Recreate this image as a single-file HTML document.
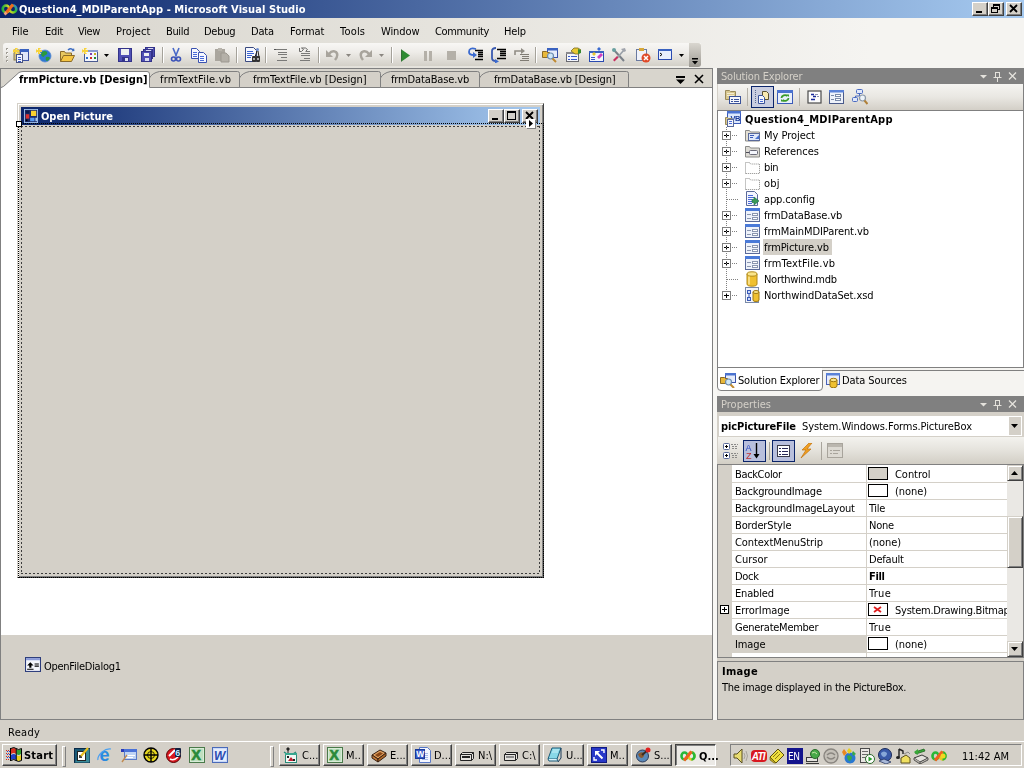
<!DOCTYPE html>
<html>
<head>
<meta charset="utf-8">
<title>Question4_MDIParentApp - Microsoft Visual Studio</title>
<style>
html,body{margin:0;padding:0;}
body{width:1024px;height:768px;overflow:hidden;background:#d4d0c8;position:relative;
 font-family:"DejaVu Sans Condensed","Liberation Sans",sans-serif;font-size:11px;color:#000;line-height:13px;}
.abs,.t{position:absolute;}
.t{white-space:nowrap;letter-spacing:-0.25px;will-change:transform;}
.b{font-weight:bold;letter-spacing:0;}
/* title bar */
#title{left:0;top:0;width:1024px;height:18px;background:linear-gradient(to right,#0a246a,#a6caf0);}
.wbtn{position:absolute;top:2px;width:16px;height:14px;background:#d4d0c8;box-sizing:border-box;
 border:1px solid;border-color:#fff #404040 #404040 #fff;box-shadow:inset -1px -1px 0 #808080;}
/* menu */
#menu{left:0;top:18px;width:1024px;height:25px;background:linear-gradient(to right,#d8d5cd 0%,#e6e4de 45%,#f5f4f1 85%);}
#tbarbg{left:0;top:43px;width:1024px;height:25px;background:linear-gradient(to right,#d8d5cd 0%,#e6e4de 45%,#f5f4f1 85%);}
#tbar{left:3px;top:43px;width:698px;height:23px;border-radius:3px 0 3px 3px;background:linear-gradient(to bottom,#f8f7f5 0%,#eeece8 40%,#d3d0c8 100%);}
#tgrip{left:689px;top:43px;width:12px;height:24px;border-radius:0 3px 3px 0;background:linear-gradient(to bottom,#d9d6cf 0%,#9d9a93 100%);}
.sep{position:absolute;top:47px;width:1px;height:16px;background:#a5a29a;box-shadow:1px 0 0 #fff;}
.ico{position:absolute;width:16px;height:16px;top:47px;}

/* document well */
#well{left:0;top:68px;width:713px;height:652px;background:#fff;box-sizing:border-box;border:1px solid #808080;border-bottom-color:#808080;}
#tabrow{left:1px;top:69px;width:711px;height:18px;background:#d8d5cd;border-bottom:1px solid #808080;}
.tab{position:absolute;top:71px;height:16px;}
#ctray{left:1px;top:635px;width:711px;height:84px;background:#d4d0c8;}
/* form */
#form{left:17px;top:103px;width:527px;height:475px;box-sizing:border-box;background:#d4d0c8;
 border:1px solid;border-color:#d4d0c8 #404040 #404040 #d4d0c8;box-shadow:inset 1px 1px 0 #fff,inset -1px -1px 0 #808080;}
#ftitle{left:21px;top:107px;width:519px;height:18px;background:linear-gradient(to right,#0a246a,#a6caf0);}
.fbtn{position:absolute;top:109px;width:16px;height:14px;background:#d4d0c8;box-sizing:border-box;
 border:1px solid;border-color:#fff #404040 #404040 #fff;box-shadow:inset -1px -1px 0 #808080;}
#pic{left:21px;top:126px;width:519px;height:448px;background:repeating-linear-gradient(to right,#3c3c3c 0 2px,transparent 2px 4px) left top/100% 1px no-repeat,repeating-linear-gradient(to right,#3c3c3c 0 2px,transparent 2px 4px) left bottom/100% 1px no-repeat,repeating-linear-gradient(to bottom,#3c3c3c 0 2px,transparent 2px 4px) left top/1px 100% no-repeat,repeating-linear-gradient(to bottom,#3c3c3c 0 2px,transparent 2px 4px) right top/1px 100% no-repeat;}
#sel{left:18px;top:123px;width:526px;height:455px;box-sizing:border-box;border:1px dotted #000;}

/* right panels */
.hdr{position:absolute;left:717px;width:307px;height:16px;background:#808080;}
.hdr .t{color:#d4d0c8;left:4px;top:2px;}
#setb{left:718px;top:84px;width:306px;height:26px;background:linear-gradient(to bottom,#f5f4f1 0%,#e9e7e2 50%,#d3cfc7 100%);}
#setree{left:717px;top:110px;width:307px;height:258px;box-sizing:border-box;background:#fff;border:1px solid #808080;}
#tstrip{left:717px;top:368px;width:307px;height:28px;background:#f5f4f1;}
#pcombo{left:718px;top:415px;width:305px;height:22px;box-sizing:border-box;background:#fff;border:1px solid #d4d0c8;}
#ptb{left:718px;top:437px;width:306px;height:27px;background:linear-gradient(to bottom,#f3f2ee 0%,#e6e4de 45%,#d2cec5 100%);}
#pgrid{left:717px;top:464px;width:307px;height:194px;box-sizing:border-box;background:#fff;border:1px solid #808080;}
.prow{position:absolute;left:732px;width:275px;height:1px;background:#d4d0c8;}
#pdesc{left:717px;top:661px;width:307px;height:59px;box-sizing:border-box;background:#d4d0c8;border:1px solid #808080;}
.sw{position:absolute;left:868px;width:20px;height:13px;box-sizing:border-box;border:1px solid #000;background:#fff;}
.pm{position:absolute;width:9px;height:9px;box-sizing:border-box;border:1px solid #808080;background:#fff;}
.pm:before{content:"";position:absolute;left:1px;top:3px;width:5px;height:1px;background:#000;}
.pm:after{content:"";position:absolute;left:3px;top:1px;width:1px;height:5px;background:#000;}

/* status + taskbar */
#taskbar{left:0;top:741px;width:1024px;height:27px;background:#d4d0c8;border-top:1px solid #fff;box-sizing:border-box;}
.tbtn{position:absolute;top:744px;width:41px;height:22px;box-sizing:border-box;background:#d4d0c8;
 border:1px solid;border-color:#fff #404040 #404040 #fff;box-shadow:inset -1px -1px 0 #808080;}
.tbtn .t{left:22px;top:4px;letter-spacing:0;}
.grip{position:absolute;top:746px;width:2px;height:19px;border:1px solid;border-color:#fff #808080 #808080 #fff;box-sizing:content-box;}
#tray{left:730px;top:744px;width:292px;height:22px;box-sizing:border-box;border:1px solid;border-color:#808080 #fff #fff #808080;}
.sb{position:absolute;left:1007px;width:16px;height:16px;box-sizing:border-box;background:#d4d0c8;border:1px solid;border-color:#d4d0c8 #404040 #404040 #d4d0c8;box-shadow:inset 1px 1px 0 #fff,inset -1px -1px 0 #808080;}
</style>
</head>
<body>
<!-- TITLE BAR -->
<div id="title" class="abs"></div>
<div class="t b" style="left:19px;top:3px;color:#fff;letter-spacing:0.077px;">Question4_MDIParentApp - Microsoft Visual Studio</div>
<div class="wbtn" style="left:972px"></div>
<div class="wbtn" style="left:988px"></div>
<div class="wbtn" style="left:1006px"></div>
<!-- MENU -->
<div id="menu" class="abs"></div>
<div class="t" style="left:12px;top:25px;letter-spacing:0.039px;">File</div>
<div class="t" style="left:45px;top:25px;letter-spacing:-0.224px;">Edit</div>
<div class="t" style="left:78px;top:25px;letter-spacing:-0.35px;">View</div>
<div class="t" style="left:116px;top:25px;letter-spacing:0.115px;">Project</div>
<div class="t" style="left:166px;top:25px;letter-spacing:-0.35px;">Build</div>
<div class="t" style="left:204px;top:25px;letter-spacing:-0.266px;">Debug</div>
<div class="t" style="left:251px;top:25px;letter-spacing:-0.214px;">Data</div>
<div class="t" style="left:290px;top:25px;letter-spacing:-0.062px;">Format</div>
<div class="t" style="left:340px;top:25px;letter-spacing:0.203px;">Tools</div>
<div class="t" style="left:381px;top:25px;letter-spacing:-0.1px;">Window</div>
<div class="t" style="left:435px;top:25px;letter-spacing:-0.35px;">Community</div>
<div class="t" style="left:504px;top:25px;letter-spacing:-0.193px;">Help</div>
<div id="tbarbg" class="abs"></div>
<div id="tbar" class="abs"></div>
<div id="tgrip" class="abs"></div>
<!--TB-ICONS-START-->
<svg class="abs" style="left:5px;top:47px" width="4" height="17" viewBox="0 0 4 17"><rect x="1" y="1" width="2" height="2" fill="#a09c94"/><rect x="2" y="2" width="1" height="1" fill="#fff"/><rect x="1" y="5" width="2" height="2" fill="#a09c94"/><rect x="2" y="6" width="1" height="1" fill="#fff"/><rect x="1" y="9" width="2" height="2" fill="#a09c94"/><rect x="2" y="10" width="1" height="1" fill="#fff"/><rect x="1" y="13" width="2" height="2" fill="#a09c94"/><rect x="2" y="14" width="1" height="1" fill="#fff"/></svg>
<svg class="abs" style="left:13px;top:47px" width="16" height="16" viewBox="0 0 16 16"><rect x="1" y="3" width="6" height="10" fill="#d0c08a" stroke="#8a7a4a" stroke-width="1"/><rect x="7.5" y="2.5" width="8" height="11" fill="#dfe6f8" stroke="#3c50a0"/><rect x="7" y="2" width="9" height="3" fill="#3a62c0"/><rect x="3.5" y="7.5" width="6" height="8" fill="#f4f6ff" stroke="#4a5580"/><path d="M5 10.500h3M5 12.500h3M5 14.500h3" stroke="#3a5ac8"/><path d="M0 3h2v-2h2v2h2v2h-2v2h-2v-2h-2z" fill="#f7d23c"/><path d="M0 3m-1 -2l2 2m4 -2l-2 2m-4 4l2 -2m4 2l-2 -2" stroke="#f9e27a" stroke-width="1" fill="none"/></svg>
<svg class="abs" style="left:36px;top:47px" width="16" height="16" viewBox="0 0 16 16"><circle cx="9" cy="9" r="6" fill="#2f79cf"/><path d="M6 5q3-2 5 0q1 2-1 3q-2 0-2 2q-2 0-3-2z M10 10q3-1 4 1q-1 3-3 3q-2-1-1-4z" fill="#2a9a3c"/><circle cx="9" cy="9" r="6" fill="none" stroke="#5a8ad0" stroke-width="0.8"/><path d="M0 3h2v-2h2v2h2v2h-2v2h-2v-2h-2z" fill="#f7d23c"/><path d="M0 3m-1 -2l2 2m4 -2l-2 2m-4 4l2 -2m4 2l-2 -2" stroke="#f9e27a" stroke-width="1" fill="none"/></svg>
<svg class="abs" style="left:59px;top:47px" width="16" height="16" viewBox="0 0 16 16"><path d="M1.500 14.500V4.500h4l1 1.500h6v3" fill="#e8c860" stroke="#8a6a28"/><path d="M1.500 14.500l3-6h11l-3 6z" fill="#f5c542" stroke="#8a6a28"/><path d="M9 3q3-2.500 5 0" stroke="#3a6ac0" fill="none" stroke-width="1.600"/><path d="M12.500 4.500l3-.5-.5-3z" fill="#3a6ac0"/></svg>
<svg class="abs" style="left:82px;top:47px" width="16" height="16" viewBox="0 0 16 16"><rect x="2.500" y="3.500" width="13" height="11" fill="#f4f6fc" stroke="#4a5a90"/><rect x="2" y="3" width="14" height="2" fill="#8a9ad0"/><rect x="8" y="6" width="2" height="2" fill="#8040b0"/><rect x="12" y="6" width="2" height="2" fill="#c8b020"/><rect x="4" y="10" width="2" height="2" fill="#2a70d0"/><rect x="8" y="10" width="2" height="2" fill="#d03020"/><rect x="12" y="10" width="2" height="2" fill="#208a30"/><path d="M0 3h2v-2h2v2h2v2h-2v2h-2v-2h-2z" fill="#f7d23c"/><path d="M0 3m-1 -2l2 2m4 -2l-2 2m-4 4l2 -2m4 2l-2 -2" stroke="#f9e27a" stroke-width="1" fill="none"/></svg>
<svg class="abs" style="left:104px;top:54px" width="5" height="3" viewBox="0 0 5 3"><path d="M0 0h5l-2.500 3z" fill="#000"/></svg>
<svg class="abs" style="left:117px;top:47px" width="16" height="16" viewBox="0 0 16 16"><rect x="1.500" y="1.500" width="13" height="13" fill="#5050b4" stroke="#33338a"/><rect x="4" y="2" width="8" height="6" fill="#eef1f0"/><rect x="5" y="10" width="7" height="4" fill="#33338a"/><rect x="8" y="11" width="3" height="3" fill="#e0e2f0"/></svg>
<svg class="abs" style="left:140px;top:47px" width="16" height="16" viewBox="0 0 16 16"><rect x="5.500" y="0.500" width="9" height="9" fill="#5050b4" stroke="#33338a"/><rect x="3.500" y="2.500" width="9" height="9" fill="#5050b4" stroke="#33338a"/><rect x="1.500" y="4.500" width="10" height="10" fill="#5050b4" stroke="#33338a"/><rect x="4" y="6" width="5" height="3" fill="#eef1f0"/><rect x="5" y="11" width="4" height="3" fill="#d8daf0"/><rect x="8" y="1" width="5" height="1" fill="#d8daf0"/><rect x="6" y="3" width="5" height="1" fill="#d8daf0"/></svg>
<div class="sep" style="left:162px"></div>
<svg class="abs" style="left:168px;top:47px" width="16" height="16" viewBox="0 0 16 16"><path d="M5 1l3.500 8.500M11 1l-3.500 8.500" stroke="#4a6ac8" stroke-width="1.600" fill="none"/><circle cx="5.500" cy="12" r="2" fill="none" stroke="#3a52b8" stroke-width="1.600"/><circle cx="10.500" cy="12" r="2" fill="none" stroke="#3a52b8" stroke-width="1.600"/></svg>
<svg class="abs" style="left:191px;top:47px" width="16" height="16" viewBox="0 0 16 16"><path d="M0.500 1.500h5l3 3v7h-8z" fill="#f6f8ff" stroke="#3a52b0"/><path d="M2 5.500h4M2 7.500h4M2 9.500h4" stroke="#4a6ad8"/><path d="M7.500 5.500h5l3 3v7h-8z" fill="#f6f8ff" stroke="#3a52b0"/><path d="M9 9.500h4M9 11.500h4M9 13.500h4" stroke="#4a6ad8"/></svg>
<svg class="abs" style="left:214px;top:47px" width="16" height="16" viewBox="0 0 16 16"><rect x="1" y="2" width="10" height="12" fill="#aaa69e"/><rect x="4" y="1" width="4" height="3" fill="#b8b4ac"/><path d="M7 6h5l3 3v6h-8z" fill="#b4b0a8" stroke="#9c9890" stroke-width="1"/></svg>
<div class="sep" style="left:236px"></div>
<svg class="abs" style="left:244px;top:47px" width="16" height="16" viewBox="0 0 16 16"><path d="M1.500 0.500h8l3 3v11h-11z" fill="#f6f8ff" stroke="#3a4a80"/><path d="M3 4.500h6M3 6.500h7M3 8.500h5M3 10.500h4" stroke="#3a62d0"/><circle cx="13.500" cy="2.500" r="1.500" fill="#6a8ad0"/><path d="M13 4l-2 6M14 4l1 6" stroke="#222" /><rect x="8" y="9" width="4" height="6" rx="1" fill="#333"/><rect x="12" y="9" width="4" height="6" rx="1" fill="#333"/><rect x="9" y="11" width="2" height="2" fill="#aaa"/><rect x="13" y="11" width="2" height="2" fill="#aaa"/></svg>
<div class="sep" style="left:265px"></div>
<svg class="abs" style="left:272px;top:47px" width="16" height="16" viewBox="0 0 16 16"><path d="M3 2.500h12M6 5.500h9M6 7.500h9M9 10.500h6M5 13.500h10" stroke="#7a7a78"/><rect x="2" y="2" width="2" height="1" fill="#555"/></svg>
<svg class="abs" style="left:295px;top:47px" width="16" height="16" viewBox="0 0 16 16"><path d="M6 8.500h9M6 6.500h9M9 11.500h6M5 13.500h10M11 4.500h4" stroke="#7a7a78"/><path d="M4.500 1v3.500h2l2-2 -2-1.500h4l2 1.500-2 2" fill="none" stroke="#6a6a68"/></svg>
<div class="sep" style="left:318px"></div>
<svg class="abs" style="left:325px;top:47px" width="16" height="16" viewBox="0 0 16 16"><path d="M4 7q3-4 7-2q3 3-1 8" fill="none" stroke="#a8a49c" stroke-width="2.500"/><path d="M1 3v7h7z" fill="#a8a49c"/></svg>
<svg class="abs" style="left:346px;top:54px" width="5" height="3" viewBox="0 0 5 3"><path d="M0 0h5l-2.500 3z" fill="#8a8680"/></svg>
<svg class="abs" style="left:357px;top:47px" width="16" height="16" viewBox="0 0 16 16"><path d="M12 7q-3-4-7-2q-3 3 1 8" fill="none" stroke="#a8a49c" stroke-width="2.500"/><path d="M15 3v7h-7z" fill="#a8a49c"/></svg>
<svg class="abs" style="left:379px;top:54px" width="5" height="3" viewBox="0 0 5 3"><path d="M0 0h5l-2.500 3z" fill="#8a8680"/></svg>
<div class="sep" style="left:391px"></div>
<svg class="abs" style="left:400px;top:47px" width="16" height="16" viewBox="0 0 16 16"><path d="M1.500 2.500l8.500 6-8.500 6z" fill="#2e8a32"/><path d="M1.500 2.500v12" stroke="#1e5a22" fill="none" stroke-width="0.800"/></svg>
<svg class="abs" style="left:423px;top:47px" width="16" height="16" viewBox="0 0 16 16"><rect x="1" y="4" width="3" height="10" fill="#b4b0a8"/><rect x="6" y="4" width="3" height="10" fill="#b4b0a8"/></svg>
<svg class="abs" style="left:445px;top:47px" width="16" height="16" viewBox="0 0 16 16"><rect x="2" y="4" width="9" height="9" fill="#b4b0a8"/></svg>
<svg class="abs" style="left:467px;top:47px" width="16" height="16" viewBox="0 0 16 16"><path d="M9 2q-7-2-7 3q0 3 5 3" fill="none" stroke="#3a6ad0" stroke-width="1.800"/><path d="M6 5l4 3-4 3z" fill="#3a6ad0"/><path d="M8 3.500h8M11 5.500h5M11 7.500h5M11 9.500h5M8 12.500h8" stroke="#000" stroke-width="1.400"/></svg>
<svg class="abs" style="left:490px;top:47px" width="16" height="16" viewBox="0 0 16 16"><path d="M6 1q-4 0-4 3v7q0 3 4 3" fill="none" stroke="#3a5ab0" stroke-width="1.800"/><path d="M5 12l4 2.500-4 2z" fill="#3a6ad0"/><path d="M7 2.500h9M10 4.500h6M10 6.500h6M10 8.500h6M7 11.500h9" stroke="#000" stroke-width="1.400"/></svg>
<svg class="abs" style="left:513px;top:47px" width="16" height="16" viewBox="0 0 16 16"><path d="M2 8v-4h7" fill="none" stroke="#908c84" stroke-width="1.600"/><path d="M8 1l4 3-4 3z" fill="#908c84"/><path d="M7 7.500h9M9 9.500h7M9 11.500h7M7 13.500h9" stroke="#807c74"/></svg>
<div class="sep" style="left:535px"></div>
<svg class="abs" style="left:542px;top:47px" width="16" height="16" viewBox="0 0 16 16"><rect x="5.500" y="1.500" width="10" height="9" fill="#e6ecfa" stroke="#3a52a8"/><rect x="5" y="1" width="11" height="2.500" fill="#3a62c0"/><path d="M0.500 4.500h4l1 1h2v5h-7z" fill="#e8b83a" stroke="#8a6a28"/><circle cx="8.500" cy="9" r="3" fill="#d0e8f8" stroke="#6a8ab0" stroke-width="1.200"/><path d="M10.500 11.500l3.500 3.500" stroke="#c08a30" stroke-width="2"/></svg>
<svg class="abs" style="left:565px;top:47px" width="16" height="16" viewBox="0 0 16 16"><rect x="1.500" y="5.500" width="12" height="9" fill="#f4f6fc" stroke="#6a6a70"/><rect x="1" y="5" width="13" height="2" fill="#8a8a90"/><path d="M3 9.500h2M6 9.500h6M3 12.500h2M6 12.500h6" stroke="#3a5ac8"/><path d="M6 4l3-3h4l3 2v2l-3 2h-3z" fill="#e8c832" stroke="#7a6a20" stroke-width="0.800"/><path d="M13 2l3 1v3l-3 1z" fill="#3a8a30"/></svg>
<svg class="abs" style="left:588px;top:47px" width="16" height="16" viewBox="0 0 16 16"><rect x="1.500" y="4.500" width="14" height="10" fill="#f4f6fc" stroke="#2a4ab0"/><rect x="1" y="4" width="15" height="2" fill="#3a62c0"/><path d="M9 2l2-2 2 2-2 2z" fill="#3a6ad0"/><path d="M4 7l2-2 2 2-2 2z" fill="#e8c832"/><path d="M9 10l4-4 2 2-4 4z" fill="#d040c0"/><path d="M3 10.500h4M3 12.500h4" stroke="#3a5ac8"/></svg>
<svg class="abs" style="left:611px;top:47px" width="16" height="16" viewBox="0 0 16 16"><path d="M3 3l10 11" stroke="#7a8088" stroke-width="2"/><circle cx="3" cy="3" r="2" fill="#6aa0a0"/><path d="M13 3l-7 8" stroke="#9aa0a8" stroke-width="1.600"/><path d="M10 2l4 -1 1 3-2 1z" fill="#a0a4ac"/><path d="M6 9l-4 4 1.500 1.500 4-4z" fill="#c83060"/></svg>
<svg class="abs" style="left:635px;top:47px" width="16" height="16" viewBox="0 0 16 16"><rect x="1.500" y="2.500" width="10" height="11" fill="#f0f2fa" stroke="#6a7aa0"/><rect x="4" y="1" width="5" height="3" fill="#d8a838"/><circle cx="11" cy="11" r="4.500" fill="#e04a28"/><path d="M9 9l4 4M13 9l-4 4" stroke="#fff" stroke-width="1.500"/></svg>
<svg class="abs" style="left:657px;top:47px" width="16" height="16" viewBox="0 0 16 16"><rect x="1.500" y="2.500" width="13" height="10" fill="#e8effc" stroke="#2a4ab0"/><rect x="1" y="2" width="14" height="2" fill="#3a62c0"/><path d="M3 6l2 1.500-2 1.500" stroke="#000" fill="none"/></svg>
<svg class="abs" style="left:679px;top:54px" width="5" height="3" viewBox="0 0 5 3"><path d="M0 0h5l-2.500 3z" fill="#000"/></svg>
<svg class="abs" style="left:692px;top:58px" width="7" height="8" viewBox="0 0 7 8"><rect x="0" y="0" width="6" height="1.500" fill="#000"/><path d="M0 3h6l-3 3.500z" fill="#000"/><path d="M1 4.500h6l-3 3.500z" fill="#fff" opacity="0.0"/></svg>
<svg class="abs" style="left:1px;top:2px" width="18" height="14" viewBox="0 0 18 14"><defs><linearGradient id="vg1" x1="0" y1="0" x2="1" y2="0"><stop offset="0" stop-color="#20b040"/><stop offset="1" stop-color="#f0e020"/></linearGradient><linearGradient id="vg2" x1="0" y1="1" x2="1" y2="0"><stop offset="0" stop-color="#f0e020"/><stop offset="0.550" stop-color="#30c030"/><stop offset="1" stop-color="#3080e0"/></linearGradient></defs><ellipse cx="5" cy="7" rx="3.300" ry="3.500" fill="none" stroke="url(#vg1)" stroke-width="2.600"/><ellipse cx="12" cy="7" rx="3.300" ry="3.500" fill="none" stroke="url(#vg2)" stroke-width="2.600"/><path d="M4.500 11.500L12 2.500" stroke="#f06a20" stroke-width="3"/><path d="M3.500 12.500l2-2" stroke="#f0a080" stroke-width="2.500"/></svg>
<svg class="abs" style="left:972px;top:2px" width="16" height="14" viewBox="0 0 16 14"><rect x="4" y="9" width="6" height="2" fill="#000"/></svg>
<svg class="abs" style="left:988px;top:2px" width="16" height="14" viewBox="0 0 16 14"><rect x="5.500" y="2.500" width="6" height="5" fill="none" stroke="#000"/><rect x="5" y="2" width="7" height="2" fill="#000"/><rect x="3.500" y="5.500" width="6" height="5" fill="#d4d0c8" stroke="#000"/><rect x="3" y="5" width="7" height="2" fill="#000"/></svg>
<svg class="abs" style="left:1006px;top:2px" width="16" height="14" viewBox="0 0 16 14"><path d="M4 3l7 7M11 3l-7 7" stroke="#000" stroke-width="1.800"/></svg>
<!--TB-ICONS-END-->

<!-- DOCUMENT WELL -->
<div id="well" class="abs"></div>
<div id="tabrow" class="abs"></div>
<svg class="abs" style="left:0;top:68px" width="713" height="21" viewBox="0 0 713 21">
 <!-- inactive tabs -->
 <g fill="#d4d0c8" stroke="#808080" stroke-width="1">
  <path d="M149.5 19.500 L149.5 10 Q152.0 5 159.5 3.500 L237.5 3.500 Q239.5 3.500 239.5 5.500 L239.5 19.500 Z"/>
  <path d="M239.5 19.500 L239.5 10 Q242.0 5 249.5 3.500 L378.5 3.500 Q380.5 3.500 380.5 5.500 L380.5 19.500 Z"/>
  <path d="M380.5 19.500 L380.5 10 Q383.0 5 390.5 3.500 L477.5 3.500 Q479.5 3.500 479.5 5.500 L479.5 19.500 Z"/>
  <path d="M479.5 19.500 L479.5 10 Q482.0 5 489.5 3.500 L626.5 3.500 Q628.5 3.500 628.5 5.500 L628.5 19.500 Z"/>
 </g>
 <!-- active tab -->
 <path d="M1 20 L1 19.5 L3.5 18.5 L19 4.5 Q21 3.5 23 3.5 L147 3.5 Q149.5 3.5 149.5 6 L149.5 20 Z" fill="#fff" stroke="none"/>
 <path d="M1 19.5 L3.5 18.5 L19 4.5 Q21 3.5 23 3.5 L147 3.5 Q149.5 3.5 149.5 6 L149.5 19.5" fill="none" stroke="#808080"/>
 <!-- dropdown & close -->
 <path d="M676 8 h9 v2 h-9z M676 11.5 h9 l-4.5 4.5z" fill="#000"/>
 <path d="M695 7 l8 8 M703 7 l-8 8" stroke="#000" stroke-width="1.6" fill="none"/>
</svg>
<div class="t b" style="left:19px;top:73px;letter-spacing:0.047px;">frmPicture.vb [Design]</div>
<div class="t" style="left:160px;top:73px;letter-spacing:0.188px;">frmTextFile.vb</div>
<div class="t" style="left:253px;top:73px;letter-spacing:0.004px;">frmTextFile.vb [Design]</div>
<div class="t" style="left:391px;top:73px;letter-spacing:-0.132px;">frmDataBase.vb</div>
<div class="t" style="left:494px;top:73px;letter-spacing:-0.152px;">frmDataBase.vb [Design]</div>
<div id="ctray" class="abs"></div>
<!-- FORM -->
<div id="form" class="abs"></div>
<div id="ftitle" class="abs"></div>
<div class="t b" style="left:41px;top:110px;color:#fff;letter-spacing:-0.054px;">Open Picture</div>
<div class="fbtn" style="left:488px"></div>
<div class="fbtn" style="left:504px"></div>
<div class="fbtn" style="left:522px"></div>
<div id="sel" class="abs"></div>
<div id="pic" class="abs"></div>
<div class="t" style="left:44px;top:660px;letter-spacing:-0.268px;">OpenFileDialog1</div>

<div class="abs" style="left:713px;top:68px;width:4px;height:652px;background:#f8f7f4"></div>
<!-- SOLUTION EXPLORER -->
<div class="hdr" style="top:68px"><div class="t" style="letter-spacing:-0.196px;">Solution Explorer</div></div>
<div id="setb" class="abs"></div>
<div id="setree" class="abs"></div>
<div class="abs" style="left:1023px;top:84px;width:1px;height:27px;background:#808080"></div>
<div class="abs" style="left:763px;top:239px;width:69px;height:16px;background:#d4d0c8"></div>
<div class="t b" style="left:745px;top:113px;letter-spacing:0.24px;">Question4_MDIParentApp</div>
<div class="t" style="left:764px;top:129px;letter-spacing:-0.04px;">My Project</div>
<div class="pm" style="left:722px;top:131px"></div>
<div class="t" style="left:764px;top:145px;letter-spacing:0.009px;">References</div>
<div class="pm" style="left:722px;top:147px"></div>
<div class="t" style="left:764px;top:161px;letter-spacing:-0.35px;">bin</div>
<div class="pm" style="left:722px;top:163px"></div>
<div class="t" style="left:764px;top:177px;letter-spacing:0.203px;">obj</div>
<div class="pm" style="left:722px;top:179px"></div>
<div class="t" style="left:764px;top:193px;letter-spacing:-0.118px;">app.config</div>
<div class="t" style="left:764px;top:209px;letter-spacing:-0.132px;">frmDataBase.vb</div>
<div class="pm" style="left:722px;top:211px"></div>
<div class="t" style="left:764px;top:225px;letter-spacing:-0.089px;">frmMainMDIParent.vb</div>
<div class="pm" style="left:722px;top:227px"></div>
<div class="t" style="left:764px;top:241px;letter-spacing:-0.105px;">frmPicture.vb</div>
<div class="pm" style="left:722px;top:243px"></div>
<div class="t" style="left:764px;top:257px;letter-spacing:0.188px;">frmTextFile.vb</div>
<div class="pm" style="left:722px;top:259px"></div>
<div class="t" style="left:764px;top:273px;letter-spacing:-0.286px;">Northwind.mdb</div>
<div class="t" style="left:764px;top:289px;letter-spacing:-0.1px;">NorthwindDataSet.xsd</div>
<div class="pm" style="left:722px;top:291px"></div>

<div id="tstrip" class="abs"></div>
<svg class="abs" style="left:717px;top:367px" width="307" height="26" viewBox="0 0 307 26">
 <path d="M0 3.5 H307" stroke="#808080" fill="none"/>
 <path d="M0.5 1 V20 Q0.5 23.5 4 23.5 H102 Q105.5 23.5 105.5 20 V4" fill="#fff" stroke="#808080"/>
 <path d="M1 1 H105 V4.5 H1z" fill="#fff"/>
 <path d="M0 0.5 H307" stroke="#808080" fill="none"/>
</svg>
<div class="t" style="left:738px;top:374px;letter-spacing:-0.196px;">Solution Explorer</div>
<div class="t" style="left:842px;top:374px;letter-spacing:-0.082px;">Data Sources</div>
<!-- PROPERTIES -->
<div class="hdr" style="top:396px"><div class="t" style="letter-spacing:0.003px;">Properties</div></div>
<div id="pcombo" class="abs"></div>
<div class="t b" style="left:721px;top:420px;letter-spacing:-0.114px;">picPictureFile</div>
<div class="t" style="left:802px;top:420px;letter-spacing:-0.095px;">System.Windows.Forms.PictureBox</div>
<div id="ptb" class="abs"></div>
<div id="pgrid" class="abs"></div>
<div class="abs" style="left:718px;top:465px;width:14px;height:192px;background:#d4d0c8"></div>
<div class="abs" style="left:732px;top:636px;width:134px;height:17px;background:#d4d0c8"></div>
<div class="abs" style="left:866px;top:465px;width:1px;height:192px;background:#d4d0c8"></div>
<div class="t" style="left:735px;top:468px;letter-spacing:-0.35px;">BackColor</div>
<div class="t" style="left:895px;top:468px;width:112px;overflow:hidden;letter-spacing:-0.042px;">Control</div>
<div class="sw" style="top:467px;background:#d4d0c8"></div>
<div class="prow" style="top:482px"></div>
<div class="t" style="left:735px;top:485px;letter-spacing:-0.215px;">BackgroundImage</div>
<div class="t" style="left:895px;top:485px;width:112px;overflow:hidden;letter-spacing:-0.084px;">(none)</div>
<div class="sw" style="top:484px;background:#fff"></div>
<div class="prow" style="top:499px"></div>
<div class="t" style="left:735px;top:502px;letter-spacing:-0.183px;">BackgroundImageLayout</div>
<div class="t" style="left:869px;top:502px;width:138px;overflow:hidden;letter-spacing:-0.35px;">Tile</div>
<div class="prow" style="top:516px"></div>
<div class="t" style="left:735px;top:519px;letter-spacing:-0.152px;">BorderStyle</div>
<div class="t" style="left:869px;top:519px;width:138px;overflow:hidden;letter-spacing:-0.276px;">None</div>
<div class="prow" style="top:533px"></div>
<div class="t" style="left:735px;top:536px;letter-spacing:-0.079px;">ContextMenuStrip</div>
<div class="t" style="left:869px;top:536px;width:138px;overflow:hidden;letter-spacing:-0.084px;">(none)</div>
<div class="prow" style="top:550px"></div>
<div class="t" style="left:735px;top:553px;letter-spacing:-0.006px;">Cursor</div>
<div class="t" style="left:869px;top:553px;width:138px;overflow:hidden;letter-spacing:-0.195px;">Default</div>
<div class="prow" style="top:567px"></div>
<div class="t" style="left:735px;top:570px;letter-spacing:-0.286px;">Dock</div>
<div class="t b" style="left:869px;top:570px;width:138px;overflow:hidden;letter-spacing:-0.35px;">Fill</div>
<div class="prow" style="top:584px"></div>
<div class="t" style="left:735px;top:587px;letter-spacing:-0.167px;">Enabled</div>
<div class="t" style="left:869px;top:587px;width:138px;overflow:hidden;letter-spacing:0.3px;">True</div>
<div class="prow" style="top:601px"></div>
<div class="t" style="left:735px;top:604px;letter-spacing:-0.042px;">ErrorImage</div>
<div class="t" style="left:895px;top:604px;width:112px;overflow:hidden;">System.Drawing.Bitmap</div>
<div class="sw" style="top:603px;background:#fff"></div>
<div class="prow" style="top:618px"></div>
<div class="t" style="left:735px;top:621px;letter-spacing:-0.264px;">GenerateMember</div>
<div class="t" style="left:869px;top:621px;width:138px;overflow:hidden;letter-spacing:0.3px;">True</div>
<div class="prow" style="top:635px"></div>
<div class="t" style="left:735px;top:638px;letter-spacing:-0.125px;">Image</div>
<div class="t" style="left:895px;top:638px;width:112px;overflow:hidden;letter-spacing:-0.084px;">(none)</div>
<div class="sw" style="top:637px;background:#fff"></div>
<div class="prow" style="top:652px"></div>

<div class="pm" style="left:720px;top:605px;border-color:#000"></div>
<div id="pdesc" class="abs"></div>
<div class="t b" style="left:722px;top:665px;letter-spacing:0.3px;">Image</div>
<div class="t" style="left:722px;top:681px;letter-spacing:-0.236px;">The image displayed in the PictureBox.</div>
<!-- STATUS BAR -->
<div class="t" style="left:8px;top:726px;letter-spacing:0.3px;">Ready</div>

<!-- property grid scrollbar -->
<div class="abs" style="left:1007px;top:465px;width:16px;height:192px;background:#eae8e4"></div>
<div class="sb" style="top:465px"></div>
<div class="sb" style="top:516px;height:52px"></div>
<div class="sb" style="top:641px"></div>
<svg class="abs" style="left:1007px;top:465px" width="16" height="191"><path d="M4 10 h7 l-3.5 -4z M4 182 h7 l-3.5 4z" fill="#000"/></svg>
<!-- TASKBAR -->
<div id="taskbar" class="abs"></div>
<div class="tbtn" style="left:2px;width:55px;"><div class="t b" style="left:21px;top:4px;letter-spacing:0.211px;">Start</div></div>
<div class="grip" style="left:62px"></div>
<div class="grip" style="left:270px"></div>
<div class="tbtn" style="left:279px"><div class="t">C...</div></div>
<div class="tbtn" style="left:323px"><div class="t">M..</div></div>
<div class="tbtn" style="left:367px"><div class="t">E...</div></div>
<div class="tbtn" style="left:411px"><div class="t">D...</div></div>
<div class="tbtn" style="left:455px"><div class="t">N:\</div></div>
<div class="tbtn" style="left:499px"><div class="t">C:\</div></div>
<div class="tbtn" style="left:543px"><div class="t">U...</div></div>
<div class="tbtn" style="left:587px"><div class="t">M..</div></div>
<div class="tbtn" style="left:631px"><div class="t">S...</div></div>
<div class="tbtn" style="left:675px;background:#eceae6;border-color:#404040 #fff #fff #404040;box-shadow:inset 1px 1px 0 #808080"><div class="t b" style="left:23px;top:5px">Q...</div></div>
<div id="tray" class="abs"></div>
<div class="t" style="left:962px;top:750px;letter-spacing:0.004px;">11:42 AM</div>
<!--ICONS2-START-->
<svg class="abs" style="left:978px;top:68px" width="46" height="16" viewBox="0 0 46 16"><path d="M2 7h7l-3.500 3.500z" fill="#e4e2dc"/><path d="M17.500 4v5M21.500 4v5M17 4.500h5M15.500 9.500h8M19.500 10v4" stroke="#e4e2dc" fill="none"/><path d="M31 4.500l7 7M38 4.500l-7 7" stroke="#e4e2dc" stroke-width="1.300" fill="none"/></svg>
<svg class="abs" style="left:978px;top:396px" width="46" height="16" viewBox="0 0 46 16"><path d="M2 7h7l-3.500 3.500z" fill="#e4e2dc"/><path d="M17.500 4v5M21.500 4v5M17 4.500h5M15.500 9.500h8M19.500 10v4" stroke="#e4e2dc" fill="none"/><path d="M31 4.500l7 7M38 4.500l-7 7" stroke="#e4e2dc" stroke-width="1.300" fill="none"/></svg>
<div class="abs" style="left:751px;top:86px;width:23px;height:22px;box-sizing:border-box;border:1px solid #0a246a;background:#c9cde0"></div>
<div class="abs" style="left:747px;top:88px;width:1px;height:18px;background:#b5b1a8"></div><div class="abs" style="left:799px;top:88px;width:1px;height:18px;background:#b5b1a8"></div>
<svg class="abs" style="left:725px;top:89px" width="16" height="16" viewBox="0 0 16 16"><path d="M0.500 1.500h4l1 1h5v8h-10z" fill="#d8c890" stroke="#9a8a5a"/><path d="M2 4.500h7M2 6.500h7" stroke="#f4ecd0"/><rect x="4.500" y="7.500" width="11" height="7" fill="#f4f6fc" stroke="#3a529a"/><path d="M6 10.500h2M9 10.500h5M6 12.500h2M9 12.500h5" stroke="#3a529a"/></svg>
<svg class="abs" style="left:754px;top:89px" width="16" height="16" viewBox="0 0 16 16"><path d="M1.500 1v14M1 3.500h2M1 7.500h2M1 11.500h2" stroke="#5a6a90" stroke-dasharray="1 1" fill="none"/><path d="M8.500 2.500h4l2 2v6h-6z" fill="#f8e8b0" stroke="#5a5030"/><path d="M4.500 6.500h4l2 2v6h-6z" fill="#f4f6fc" stroke="#3a529a"/><path d="M6 10.500h3M6 12.500h3" stroke="#4a6ad8"/></svg>
<svg class="abs" style="left:777px;top:89px" width="16" height="16" viewBox="0 0 16 16"><rect x="0.500" y="1.500" width="15" height="13" fill="#e8effc" stroke="#3a5ab8"/><rect x="0" y="1" width="16" height="3" fill="#4a72d0"/><path d="M4.500 9a3.500 3 0 0 1 6-2M11.500 9a3.500 3 0 0 1-6 2" fill="none" stroke="#3a9a28" stroke-width="1.800"/><path d="M9.500 5.500h2.500v2.500zM6.500 12.500h-2.500v-2.500z" fill="#3a9a28"/></svg>
<svg class="abs" style="left:807px;top:89px" width="16" height="16" viewBox="0 0 16 16"><rect x="1" y="2" width="13" height="12" fill="#fdfdfd" stroke="#4a4a4a" stroke-width="1.200"/><path d="M4 5.500h3M6 7.500h3M4 10.500h4" stroke="#1a2a9a" stroke-width="1.300"/><path d="M8 5.500h3M10 7.500h2" stroke="#8a90b0"/></svg>
<svg class="abs" style="left:829px;top:89px" width="16" height="16" viewBox="0 0 16 16"><rect x="0.500" y="1.500" width="14" height="13" fill="#eef2fa" stroke="#4a5a8a"/><rect x="0" y="1" width="15" height="2.500" fill="#5a82d8"/><rect x="6.500" y="5.500" width="5" height="2" fill="#fff" stroke="#7a8aa8"/><rect x="6.500" y="9.500" width="5" height="2" fill="#fff" stroke="#7a8aa8"/><path d="M2 6.500h3M2 10.500h3" stroke="#7a8aa8"/></svg>
<svg class="abs" style="left:852px;top:89px" width="16" height="16" viewBox="0 0 16 16"><rect x="4.500" y="0.500" width="6" height="4" rx="1" fill="#e0e8fa" stroke="#4a6ac0"/><rect x="0.500" y="8.500" width="5" height="4" rx="1" fill="#e0e8fa" stroke="#4a6ac0"/><path d="M7.500 5v2h-4v2" fill="none" stroke="#4a6ac0"/><circle cx="10.500" cy="9" r="3" fill="#eef4fa" stroke="#8a98a8" stroke-width="1.200"/><path d="M12.500 11.500l3 3.500" stroke="#b08038" stroke-width="2"/></svg>
<svg class="abs" style="left:717px;top:110px" width="30" height="200" viewBox="0 0 30 200"><path d="M9.500 17v168" stroke="#808080" stroke-dasharray="1 1" fill="none"/><path d="M15 25.5h6" stroke="#808080" stroke-dasharray="1 1" fill="none"/><path d="M15 41.5h6" stroke="#808080" stroke-dasharray="1 1" fill="none"/><path d="M15 57.5h6" stroke="#808080" stroke-dasharray="1 1" fill="none"/><path d="M15 73.5h6" stroke="#808080" stroke-dasharray="1 1" fill="none"/><path d="M10 89.5h11" stroke="#808080" stroke-dasharray="1 1" fill="none"/><path d="M15 105.5h6" stroke="#808080" stroke-dasharray="1 1" fill="none"/><path d="M15 121.5h6" stroke="#808080" stroke-dasharray="1 1" fill="none"/><path d="M15 137.5h6" stroke="#808080" stroke-dasharray="1 1" fill="none"/><path d="M15 153.5h6" stroke="#808080" stroke-dasharray="1 1" fill="none"/><path d="M10 169.5h11" stroke="#808080" stroke-dasharray="1 1" fill="none"/><path d="M15 185.5h6" stroke="#808080" stroke-dasharray="1 1" fill="none"/></svg>
<svg class="abs" style="left:725px;top:111px" width="16" height="16" viewBox="0 0 16 16"><rect x="2.500" y="0.500" width="13" height="12" fill="#dce8fc" stroke="#3a5ab8"/><rect x="2" y="0" width="14" height="2.500" fill="#4a72d0"/><text x="5.500" y="9.500" font-size="7.500" font-weight="bold" fill="#1a3a9a" font-family="Liberation Sans,sans-serif" letter-spacing="-0.500">VB</text><path d="M0.500 6.500h2l1 1h3v6h-6z" fill="#d8c890" stroke="#9a8a5a"/><rect x="2.500" y="8.500" width="6" height="7" fill="#f4f6fc" stroke="#5a6a9a"/><path d="M4 10.500h3M4 12.500h3" stroke="#4a6ad8"/></svg>
<svg class="abs" style="left:745px;top:127px" width="16" height="16" viewBox="0 0 16 16"><path d="M0.500 3.500h4l1 1.500h9v9h-14z" fill="#e4e0d4" stroke="#8a8a88"/><rect x="3.500" y="6.500" width="11" height="7" fill="#dfe8fa" stroke="#5a6a9a"/><path d="M5 8.500h4M5 10.500h3" stroke="#3a5ab8"/><path d="M10 12l4-4v4z" fill="#4a72d0"/></svg>
<svg class="abs" style="left:745px;top:143px" width="16" height="16" viewBox="0 0 16 16"><path d="M0.500 3.500h4l1 1.500h9v9h-14z" fill="#dcdad4" stroke="#8a8a88"/><rect x="4.500" y="7.500" width="8" height="4" rx="1" fill="#f4f6fc" stroke="#6a6a78"/><path d="M1 9.500h3" stroke="#4a4a58"/></svg>
<svg class="abs" style="left:745px;top:159px" width="16" height="16" viewBox="0 0 16 16"><path d="M0.500 14.500v-11h4l1 1.500h9v9.500z" fill="#fff" stroke="#8a8a88" stroke-dasharray="1 1"/></svg>
<svg class="abs" style="left:745px;top:175px" width="16" height="16" viewBox="0 0 16 16"><path d="M0.500 14.500v-11h4l1 1.500h9v9.500z" fill="#fff" stroke="#8a8a88" stroke-dasharray="1 1"/></svg>
<svg class="abs" style="left:745px;top:191px" width="16" height="16" viewBox="0 0 16 16"><path d="M1.500 0.500h8l3 3v11h-11z" fill="#f4f6ff" stroke="#5a6a9a"/><path d="M3 4.500h5M3 6.500h6M3 8.500h4M3 10.500h5M3 12.500h4" stroke="#4a6ad8"/><path d="M9 6l5 4-5 4v-2.500h-2v-3h2z" fill="#3a9a58" stroke="#1a6a48" stroke-width="0.600"/></svg>
<svg class="abs" style="left:745px;top:207px" width="16" height="16" viewBox="0 0 16 16"><rect x="0.500" y="1.500" width="14" height="13" fill="#eef2fa" stroke="#5a6a9a"/><rect x="0" y="1" width="15" height="3" fill="#4a7ad8"/><rect x="7.500" y="6.500" width="5" height="2" fill="#fff" stroke="#8a96b0"/><rect x="7.500" y="10.500" width="5" height="2" fill="#fff" stroke="#8a96b0"/><path d="M2 7.500h4M2 11.500h4" stroke="#8a96b0"/></svg>
<svg class="abs" style="left:745px;top:223px" width="16" height="16" viewBox="0 0 16 16"><rect x="0.500" y="1.500" width="14" height="13" fill="#eef2fa" stroke="#5a6a9a"/><rect x="0" y="1" width="15" height="3" fill="#4a7ad8"/><rect x="7.500" y="6.500" width="5" height="2" fill="#fff" stroke="#8a96b0"/><rect x="7.500" y="10.500" width="5" height="2" fill="#fff" stroke="#8a96b0"/><path d="M2 7.500h4M2 11.500h4" stroke="#8a96b0"/></svg>
<svg class="abs" style="left:745px;top:239px" width="16" height="16" viewBox="0 0 16 16"><rect x="0.500" y="1.500" width="14" height="13" fill="#eef2fa" stroke="#5a6a9a"/><rect x="0" y="1" width="15" height="3" fill="#4a7ad8"/><rect x="7.500" y="6.500" width="5" height="2" fill="#fff" stroke="#8a96b0"/><rect x="7.500" y="10.500" width="5" height="2" fill="#fff" stroke="#8a96b0"/><path d="M2 7.500h4M2 11.500h4" stroke="#8a96b0"/></svg>
<svg class="abs" style="left:745px;top:255px" width="16" height="16" viewBox="0 0 16 16"><rect x="0.500" y="1.500" width="14" height="13" fill="#eef2fa" stroke="#5a6a9a"/><rect x="0" y="1" width="15" height="3" fill="#4a7ad8"/><rect x="7.500" y="6.500" width="5" height="2" fill="#fff" stroke="#8a96b0"/><rect x="7.500" y="10.500" width="5" height="2" fill="#fff" stroke="#8a96b0"/><path d="M2 7.500h4M2 11.500h4" stroke="#8a96b0"/></svg>
<svg class="abs" style="left:745px;top:271px" width="16" height="16" viewBox="0 0 16 16"><path d="M2 3v10a5 2.200 0 0 0 10 0v-10z" fill="#f0c030"/><path d="M2 3v10a5 2.200 0 0 0 10 0v-10" fill="none" stroke="#b08818"/><ellipse cx="7" cy="3" rx="5" ry="2.200" fill="#fae48a" stroke="#b08818"/><path d="M4 5.500v8" stroke="#fbe9a0" stroke-width="1.500"/></svg>
<svg class="abs" style="left:745px;top:287px" width="16" height="16" viewBox="0 0 16 16"><rect x="0.500" y="0.500" width="13" height="15" fill="#f4f6fc" stroke="#7a8aa8"/><rect x="2.500" y="3.500" width="3" height="3" fill="#d0dcf8" stroke="#3a5ab8"/><rect x="2.500" y="10.500" width="3" height="3" fill="#d0dcf8" stroke="#3a5ab8"/><path d="M4 7v3" stroke="#3a5ab8"/><path d="M8 5v8a3 1.500 0 0 0 6 0v-8z" fill="#f0c030" stroke="#a07810"/><ellipse cx="11" cy="5" rx="3" ry="1.500" fill="#fae48a" stroke="#a07810"/></svg>
<svg class="abs" style="left:720px;top:372px" width="16" height="16" viewBox="0 0 16 16"><rect x="5.500" y="1.500" width="10" height="9" fill="#e6ecfa" stroke="#3a52a8"/><rect x="5" y="1" width="11" height="2.500" fill="#4a72d0"/><path d="M0.500 5.500h4l1 1h2v5h-7z" fill="#e8b83a" stroke="#8a6a28"/><circle cx="8.500" cy="10" r="3" fill="#d0e8f8" stroke="#6a8ab0" stroke-width="1.200"/><path d="M10.500 12.500l3.500 3.500" stroke="#c08a30" stroke-width="2"/></svg>
<svg class="abs" style="left:825px;top:372px" width="16" height="16" viewBox="0 0 16 16"><rect x="1.500" y="1.500" width="13" height="11" fill="#e6ecfa" stroke="#4a62b8"/><rect x="1" y="1" width="14" height="2.500" fill="#5a82d8"/><path d="M5 8v6a3.500 1.700 0 0 0 7 0v-6z" fill="#f0c030" stroke="#a07810"/><ellipse cx="8.500" cy="8" rx="3.500" ry="1.700" fill="#fae48a" stroke="#a07810"/></svg>
<div class="abs" style="left:743px;top:440px;width:23px;height:22px;box-sizing:border-box;border:1px solid #0a246a;background:#b8bfdc"></div>
<div class="abs" style="left:772px;top:440px;width:23px;height:22px;box-sizing:border-box;border:1px solid #0a246a;background:#b8bfdc"></div>
<div class="abs" style="left:769px;top:442px;width:1px;height:18px;background:#a8a49c"></div><div class="abs" style="left:821px;top:442px;width:1px;height:18px;background:#a8a49c"></div>
<svg class="abs" style="left:723px;top:443px" width="16" height="16" viewBox="0 0 16 16"><rect x="0.500" y="0.500" width="6" height="6" rx="1" fill="#fff" stroke="#5a6a9a"/><rect x="0.500" y="9.500" width="6" height="6" rx="1" fill="#fff" stroke="#5a6a9a"/><path d="M2 3.500h3M3.500 2v3M2 12.500h3M3.500 11v3" stroke="#000"/><path d="M8 1.500h7M9 3.500h6M9 5.500h6M8 10.500h7M9 12.500h6M9 14.500h6" stroke="#8a8a88" stroke-dasharray="2 1"/></svg>
<svg class="abs" style="left:745px;top:443px" width="16" height="16" viewBox="0 0 16 16"><text x="0.500" y="7.500" font-size="9" fill="#2a4ac0" font-family="Liberation Sans,sans-serif">A</text><text x="1" y="15.500" font-size="9" fill="#c03030" font-family="Liberation Sans,sans-serif">Z</text><path d="M11.500 0v13" stroke="#000" stroke-width="1.400"/><path d="M8.500 11l3 4.500 3-4.500z" fill="#000"/></svg>
<svg class="abs" style="left:776px;top:444px" width="16" height="14" viewBox="0 0 16 14"><rect x="1.500" y="1.500" width="12" height="11" fill="#fff" stroke="#3a3a48"/><path d="M3 4.500h2M6 4.500h6M3 7.500h2M6 7.500h6M3 10.500h2M6 10.500h6" stroke="#2a2a58"/></svg>
<svg class="abs" style="left:799px;top:443px" width="16" height="16" viewBox="0 0 16 16"><path d="M10 0l-7 7h4l-5 8 10-9h-4l5-6z" fill="#f0a020" stroke="#c07010" stroke-width="0.700"/></svg>
<svg class="abs" style="left:827px;top:443px" width="16" height="16" viewBox="0 0 16 16"><rect x="0.500" y="0.500" width="15" height="14" fill="#dcd9d2" stroke="#a8a49c"/><rect x="1" y="1" width="14" height="3" fill="#bab6ae"/><path d="M3 7.500h2M6 7.500h7M3 10.500h2M6 10.500h5" stroke="#a8a49c"/></svg>
<div class="abs" style="left:1009px;top:417px;width:12px;height:18px;background:#d4d0c8"></div>
<svg class="abs" style="left:1011px;top:424px" width="7" height="4" viewBox="0 0 7 4"><path d="M0 0h7l-3.500 4z" fill="#000"/></svg>
<svg class="abs" style="left:868px;top:603px" width="19" height="11" viewBox="0 0 19 11"><path d="M6 4l7 5M13 4l-7 5" stroke="#e02020" stroke-width="1.800"/></svg>
<svg class="abs" style="left:24px;top:109px" width="14" height="14" viewBox="0 0 16 16"><rect x="0.500" y="0.500" width="15" height="15" fill="#1a2a6a" stroke="#a8c8f0"/><rect x="8" y="2" width="6" height="6" fill="#f8d030"/><rect x="2" y="6" width="4" height="5" fill="#d83030"/><rect x="7" y="10" width="5" height="4" fill="#5a9af0"/><rect x="2" y="2" width="4" height="3" fill="#0a1a4a"/><rect x="13" y="10" width="2" height="4" fill="#a8c8f0"/><rect x="2" y="12" width="2" height="2" fill="#000"/></svg>
<svg class="abs" style="left:488px;top:109px" width="16" height="14" viewBox="0 0 16 14"><rect x="4" y="9" width="6" height="2" fill="#000"/></svg>
<svg class="abs" style="left:504px;top:109px" width="16" height="14" viewBox="0 0 16 14"><rect x="3.500" y="2.500" width="8" height="8" fill="none" stroke="#000"/><rect x="3" y="2" width="9" height="2" fill="#000"/></svg>
<svg class="abs" style="left:522px;top:109px" width="16" height="14" viewBox="0 0 16 14"><path d="M4 3l7 7M11 3l-7 7" stroke="#000" stroke-width="1.800"/></svg>
<div class="abs" style="left:526px;top:119px;width:9px;height:9px;background:#fff;box-shadow:1px 1px 0 #808080"></div>
<svg class="abs" style="left:529px;top:120px" width="4" height="7" viewBox="0 0 4 7"><path d="M0 0l4 3.500-4 3.500z" fill="#000"/></svg>
<div class="abs" style="left:16px;top:121px;width:6px;height:6px;box-sizing:border-box;border:1px solid #000;background:#fff"></div>
<svg class="abs" style="left:25px;top:657px" width="16" height="15" viewBox="0 0 15 14"><rect x="0.500" y="0.500" width="14" height="13" fill="#f4f6fc" stroke="#2a3a7a"/><rect x="1" y="1" width="13" height="2" fill="#8a9ad8"/><path d="M5 5l3 3h-2v2h-2v-2h-2z" fill="#000"/><path d="M2 11.500h6M9 6.500h4M9 8.500h4" stroke="#000"/></svg>
<!--ICONS2-END-->
<!--ICONS3-START-->
<svg class="abs" style="left:6px;top:747px" width="16" height="16" viewBox="0 0 16 16"><path d="M5 2q3-2 5 0v5q-2-2-5 0z" fill="#d83020"/><path d="M10.500 2q2 2 4.500 0v5q-2.500 2-4.500 0z" fill="#30a030"/><path d="M5 8q3-2 5 0v5q-2-2-5 0z" fill="#2040c8"/><path d="M10.500 8q2 2 4.500 0v5q-2.500 2-4.500 0z" fill="#e8d020"/><path d="M4.500 1v13M10.250 1.500v12.500M15.500 1.500v12" stroke="#000" fill="none"/><path d="M5 1.500q3-2 5 0q2.500 2 5.500 0M5 13.500q3-2 5 0q2.500 2 5.500 0" stroke="#000" fill="none"/><path d="M0 3.500h3M0 6.500h3M0 9.500h3M0 12.500h3" stroke="#d83020" stroke-dasharray="1 1"/><path d="M1 4.500h3M1 7.500h3M1 10.500h3" stroke="#2040c8" stroke-dasharray="1 1"/></svg>
<svg class="abs" style="left:74px;top:747px" width="16" height="16" viewBox="0 0 16 16"><rect x="0.500" y="1.500" width="15" height="14" fill="#1a5a78" stroke="#0a2a48"/><path d="M0.500 15.500l15-14v14z" fill="#3a8a98"/><rect x="3.500" y="4.500" width="8" height="9" fill="#fff" stroke="#222"/><rect x="5" y="8" width="3" height="3" fill="#444"/><path d="M7 9l7-8" stroke="#e8c020" stroke-width="2.200"/></svg>
<svg class="abs" style="left:97px;top:747px" width="16" height="16" viewBox="0 0 16 16"><text x="2.500" y="14" font-size="18" font-weight="bold" fill="#2a8ae0" font-family="Liberation Sans,sans-serif">e</text><path d="M1 13q-1-3 4-8q5-4 9-3" fill="none" stroke="#4aa0f0" stroke-width="1.200"/></svg>
<svg class="abs" style="left:121px;top:747px" width="16" height="16" viewBox="0 0 16 16"><rect x="3.500" y="2.500" width="12" height="10" fill="#c0d4f4" stroke="#5a7ac8"/><rect x="3" y="2" width="13" height="3" fill="#4a72d8"/><path d="M5 8.500h9M5 10.500h7" stroke="#fff"/><path d="M1 15l5-7" stroke="#c08a50" stroke-width="1.400"/><rect x="0" y="2" width="3" height="3" fill="#2a3ab8"/></svg>
<svg class="abs" style="left:143px;top:747px" width="16" height="16" viewBox="0 0 16 16"><circle cx="8" cy="8" r="7" fill="#e8d820" stroke="#000" stroke-width="1.400"/><path d="M8 1v14M1 8h14" stroke="#000" stroke-width="1.400"/><circle cx="8" cy="8" r="3.500" fill="none" stroke="#000" stroke-width="0.800"/></svg>
<svg class="abs" style="left:166px;top:747px" width="16" height="16" viewBox="0 0 16 16"><circle cx="7.500" cy="8.500" r="7" fill="#d81820" stroke="#500"/><path d="M3 9l6-6" stroke="#fff" stroke-width="2"/><path d="M4 12q4 2 8-2" stroke="#fff" stroke-width="1.500" fill="none"/><rect x="9" y="1" width="6" height="9" rx="1" fill="#102040"/><text x="9.300" y="9" font-size="9" font-weight="bold" fill="#bfe8ff" font-family="Liberation Sans,sans-serif">6</text></svg>
<svg class="abs" style="left:189px;top:747px" width="16" height="16" viewBox="0 0 16 16"><rect x="0.500" y="0.500" width="15" height="15" fill="#d8ecd8" stroke="#4a7a4a"/><rect x="2" y="2" width="12" height="12" fill="#c0e0c0"/><text x="2.500" y="13" font-size="14" font-weight="bold" fill="#2a8a3a" stroke="#2a8a3a" stroke-width="0.700" font-family="Liberation Sans,sans-serif">X</text></svg>
<svg class="abs" style="left:212px;top:747px" width="16" height="16" viewBox="0 0 16 16"><rect x="0.500" y="0.500" width="15" height="15" fill="#c8d8f8" stroke="#4a6ab8"/><rect x="2" y="2" width="12" height="12" fill="#e4ecfc"/><text x="2" y="12.500" font-size="12" font-weight="bold" font-style="italic" fill="#2a4ab0" font-family="Liberation Sans,sans-serif">W</text></svg>
<svg class="abs" style="left:283px;top:747px" width="16" height="16" viewBox="0 0 16 16"><path d="M3 2l2-2 2 2-2 2z" fill="#222"/><path d="M5 3v4" stroke="#222"/><path d="M1 5l3 2M13 5l-3 2" stroke="#2a8a78" stroke-width="1.500"/><rect x="2.500" y="6.500" width="11" height="9" fill="#f0f8f4" stroke="#2a8a78"/><rect x="2" y="6" width="12" height="2" fill="#38a890"/><path d="M5 14l3-4 3 4z" fill="#c02030"/><rect x="4" y="9" width="2" height="2" fill="#222"/><rect x="10" y="12" width="2" height="2" fill="#222"/></svg>
<svg class="abs" style="left:327px;top:747px" width="16" height="16" viewBox="0 0 16 16"><rect x="0.500" y="0.500" width="15" height="15" fill="#d8ecd8" stroke="#4a7a4a"/><rect x="2" y="2" width="12" height="12" fill="#c0e0c0"/><text x="2.500" y="13" font-size="14" font-weight="bold" fill="#2a8a3a" stroke="#2a8a3a" stroke-width="0.700" font-family="Liberation Sans,sans-serif">X</text></svg>
<svg class="abs" style="left:371px;top:747px" width="16" height="16" viewBox="0 0 16 16"><path d="M1 8l8-5 6 3-8 6z" fill="#e0a060" stroke="#3a2010"/><path d="M1 8v3l6 4v-3z" fill="#c07838" stroke="#3a2010"/><path d="M7 12v3l8-6v-3z" fill="#b06828" stroke="#3a2010"/><path d="M4 8l5-3 3 1.500-5 3.500z" fill="#8a4818"/></svg>
<svg class="abs" style="left:415px;top:747px" width="16" height="16" viewBox="0 0 16 16"><path d="M4.500 0.500h8l3 3v12h-11z" fill="#f4f6ff" stroke="#5a7ac8"/><path d="M7 6.500h6M7 8.500h6M7 10.500h6M7 12.500h6" stroke="#a8b8e8"/><rect x="0.500" y="2.500" width="9" height="9" fill="#3a5ac8" stroke="#1a3a98"/><text x="1.200" y="10" font-size="8.500" font-weight="bold" fill="#fff" font-family="Liberation Sans,sans-serif">W</text></svg>
<svg class="abs" style="left:459px;top:748px" width="16" height="16" viewBox="0 0 16 16"><path d="M1.500 6.500l2-2h11v6l-2 2h-11z" fill="#e4e2de" stroke="#222"/><path d="M1.500 6.500h11v6M12.500 6.500l2-2" fill="none" stroke="#222"/><rect x="3" y="8" width="8" height="2" fill="#222"/></svg>
<svg class="abs" style="left:503px;top:748px" width="16" height="16" viewBox="0 0 16 16"><path d="M1.500 6.500l2-2h11v6l-2 2h-11z" fill="#e4e2de" stroke="#222"/><path d="M1.500 6.500h11v6M12.500 6.500l2-2" fill="none" stroke="#222"/><rect x="3" y="8" width="8" height="2" fill="#8a8a8a"/></svg>
<svg class="abs" style="left:547px;top:747px" width="16" height="16" viewBox="0 0 16 16"><path d="M5 1h9l-4 11h-9z" fill="#88d8e8" stroke="#1a5a78"/><path d="M1 12l1 2h9l-1-2" fill="#d8f0f8" stroke="#1a5a78"/><path d="M14 1v10l-3 4" fill="none" stroke="#1a3a58"/><path d="M6 3h6M5 5h6" stroke="#c8f0f8"/></svg>
<svg class="abs" style="left:591px;top:747px" width="16" height="16" viewBox="0 0 16 16"><rect x="0.500" y="0.500" width="15" height="15" fill="#2838c8" stroke="#101a80"/><path d="M4 4h5l-1.800 1.800 5 5-1.400 1.400-5-5-1.800 1.800z" fill="#fff"/><path d="M3 10v3h3M10 3h3v3" stroke="#fff" fill="none" stroke-width="1.400"/></svg>
<svg class="abs" style="left:635px;top:747px" width="16" height="16" viewBox="0 0 16 16"><circle cx="7.500" cy="9" r="6" fill="#5a88b8" stroke="#2a3a58"/><path d="M3 7q3-3 6-1q1 3-2 5q-3 0-4-4z" fill="#8a5a30"/><path d="M7 8l7-6" stroke="#3a2a20" stroke-width="2"/><circle cx="13" cy="3" r="2.500" fill="#e02020"/></svg>
<svg class="abs" style="left:680px;top:748px" width="16" height="16" viewBox="0 0 16 16"><ellipse cx="4.500" cy="8" rx="3" ry="3.500" fill="none" stroke="#28b838" stroke-width="2.600"/><ellipse cx="11.500" cy="8" rx="3" ry="3.500" fill="none" stroke="#e8c820" stroke-width="2.600"/><path d="M11.500 4.500a3 3.500 0 0 1 0 7" fill="none" stroke="#28b838" stroke-width="2.600"/><path d="M4 12.500L11.500 3.500" stroke="#f06020" stroke-width="3"/></svg>
<svg class="abs" style="left:733px;top:748px" width="16" height="16" viewBox="0 0 16 16"><path d="M1 6h3l5-5v14l-5-5h-3z" fill="#e8dc70" stroke="#5a5020"/><path d="M11 5q2 3 0 6M13 3q3 5 0 10" fill="none" stroke="#a8a49c"/></svg>
<svg class="abs" style="left:751px;top:748px" width="16" height="16" viewBox="0 0 16 16"><rect x="0" y="2" width="16" height="12" rx="4" fill="#d81820"/><text x="0.800" y="12" font-size="10" font-weight="bold" font-style="italic" fill="#fff" letter-spacing="-0.800" font-family="Liberation Sans,sans-serif">ATI</text></svg>
<svg class="abs" style="left:769px;top:748px" width="16" height="16" viewBox="0 0 16 16"><path d="M1 9l8-8 6 6-8 8z" fill="#f0e040" stroke="#5a5010"/><path d="M4 9l5-5M6 11l5-5" stroke="#8a7a10"/><path d="M1 9v3l4 3h2z" fill="#c0a820" stroke="#5a5010" stroke-width="0.600"/></svg>
<div class="abs" style="left:787px;top:748px;width:16px;height:16px;background:#14148c"></div>
<div class="t" style="left:788px;top:750px;color:#fff;font-size:10px;letter-spacing:-0.5px;">EN</div>
<svg class="abs" style="left:805px;top:748px" width="16" height="16" viewBox="0 0 16 16"><rect x="1.500" y="9.500" width="11" height="4" fill="#e4e2de" stroke="#3a3a3a"/><circle cx="10" cy="6" r="4.500" fill="#48a848" stroke="#2a6a2a"/><path d="M7 5q3-2 5 1" stroke="#c8e8a8" fill="none"/><path d="M1 15.500h13" stroke="#3a3a3a"/></svg>
<svg class="abs" style="left:823px;top:748px" width="16" height="16" viewBox="0 0 16 16"><circle cx="8" cy="8" r="7" fill="#c4c0b8" stroke="#8a8680" stroke-width="1.400"/><path d="M4 7q4-4 8 0M12 9q-4 4-8 0" fill="none" stroke="#8a8680" stroke-width="1.400"/></svg>
<svg class="abs" style="left:841px;top:748px" width="16" height="16" viewBox="0 0 16 16"><circle cx="9" cy="10" r="5.500" fill="#2a78d0"/><path d="M6 8q3-2 5 1q0 3-3 4q-2-2-2-5z" fill="#38a848"/><path d="M3 1l3 4-3 3-2-4z" fill="#e88820"/><path d="M8 0l3 3-3 3-2-3z" fill="#e8d020"/><path d="M12 3l3 3-3 2-1-3z" fill="#38a848"/></svg>
<svg class="abs" style="left:859px;top:748px" width="16" height="16" viewBox="0 0 16 16"><rect x="1.500" y="0.500" width="9" height="14" fill="#e8e6e2" stroke="#4a4a4a"/><path d="M3 3.500h6M3 6.500h6M3 9.500h4" stroke="#6a6a6a"/><circle cx="11" cy="11" r="4.500" fill="#fff" stroke="#2a6a2a"/><path d="M9.500 8.500l4 2.500-4 2.500z" fill="#28a028"/></svg>
<svg class="abs" style="left:877px;top:748px" width="16" height="16" viewBox="0 0 16 16"><circle cx="8" cy="7" r="6.500" fill="#3a5aa8" stroke="#1a2a58"/><path d="M4 5q3-3 6 0q0 3-3 4q-3-1-3-4z" fill="#88a8d8"/><path d="M2 13l5-2 7 3-5 2z" fill="#a8b8d8" stroke="#1a2a58" stroke-width="0.700"/></svg>
<svg class="abs" style="left:895px;top:748px" width="16" height="16" viewBox="0 0 16 16"><path d="M4 1v8M4 1l4 2v3" stroke="#222" stroke-width="1.400" fill="none"/><ellipse cx="3" cy="9.500" rx="2" ry="1.500" fill="#222"/><path d="M6 10l5-3 4 3v5h-9z" fill="#f0e060" stroke="#5a5020"/><path d="M9 6l4-2 2 2" fill="none" stroke="#8a8a8a"/></svg>
<svg class="abs" style="left:913px;top:748px" width="16" height="16" viewBox="0 0 16 16"><path d="M2 4l9-3 1 2-9 3z" fill="#38a838" stroke="#1a5a1a" stroke-width="0.700"/><path d="M1 4l4-3v6z" fill="#38a838"/><path d="M1 10l8-3 6 3-8 4z" fill="#e4e2de" stroke="#3a3a3a"/><path d="M1 10v2l6 4v-2M7 16l8-4v-2" fill="#b8b4ac" stroke="#3a3a3a" stroke-width="0.800"/></svg>
<svg class="abs" style="left:931px;top:748px" width="16" height="16" viewBox="0 0 16 16"><ellipse cx="4.500" cy="8" rx="3" ry="3.500" fill="none" stroke="#28b838" stroke-width="2.600"/><ellipse cx="11.500" cy="8" rx="3" ry="3.500" fill="none" stroke="#e8c820" stroke-width="2.600"/><path d="M11.500 4.500a3 3.500 0 0 1 0 7" fill="none" stroke="#28b838" stroke-width="2.600"/><path d="M4 12.500L11.500 3.500" stroke="#f06020" stroke-width="3"/><circle cx="12" cy="8" r="2.500" fill="#f0d820"/></svg>
<!--ICONS3-END-->
</body>
</html>
